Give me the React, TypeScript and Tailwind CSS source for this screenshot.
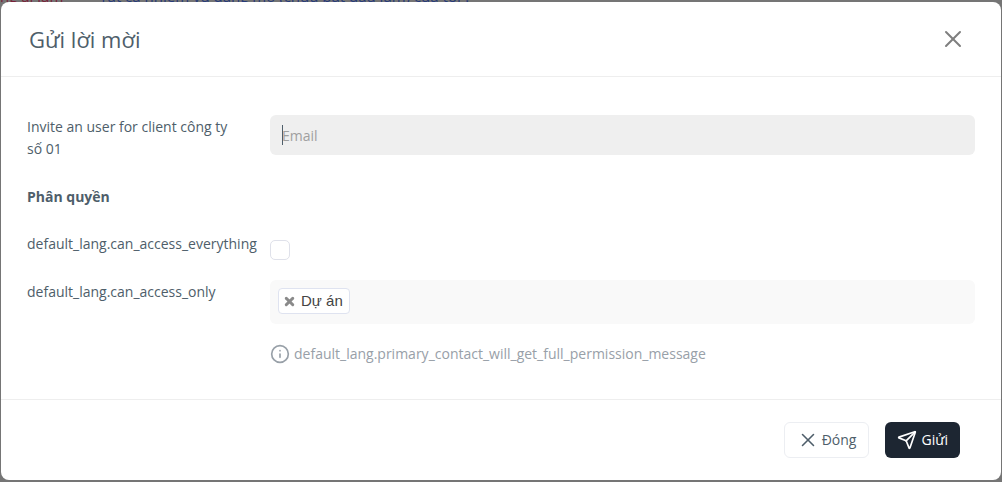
import { Info, Send, X } from "lucide-react";

const ACCESS_ITEMS = ["Dự án"];

export default function App() {
  return (
    <div className="relative min-h-screen overflow-hidden bg-[#757575] px-px py-[2px] font-['Open_Sans','Noto_Sans',sans-serif] text-sm text-[#4e5e6a]">
      <div className="absolute -top-3 left-0 flex gap-9 text-[15px] leading-4 whitespace-nowrap">
        <span className="text-[#7a2238]">ng ai làm</span>
        <span className="text-[#263a7a]">Tất cả nhiệm vụ đang mở (chưa bắt đầu làm) của tôi ?</span>
      </div>

      <form
        role="dialog"
        aria-labelledby="dialog-title"
        onSubmit={(e) => e.preventDefault()}
        className="relative rounded-lg bg-white"
      >
        <header className="flex h-[75px] items-center justify-between border-b border-[#eeeeee] pr-[34px] pl-7">
          <h1 id="dialog-title" className="text-[22px] leading-8">Gửi lời mời</h1>
          <button type="button" aria-label="Close" className="text-[#7f7f7f]">
            <X size={28} strokeWidth={1.7} />
          </button>
        </header>

        <div className="grid grid-cols-[243px_1fr] px-[26px] pt-[38px] pb-[35px]">
          <label htmlFor="email" className="pt-px pr-8 leading-[22px]">
            Invite an user for client công ty số 01
          </label>
          <div className="relative h-10">
            <input
              id="email"
              type="email"
              placeholder="Email"
              className="h-10 w-full rounded-md bg-[#efefef] px-3 caret-transparent outline-none placeholder:text-[#a0a0a0]"
            />
            <span aria-hidden="true" className="absolute top-[10px] left-3 h-5 w-px bg-[#4e5e6a]" />
          </div>

          <h2 className="col-span-2 mt-[26px] mb-[25px] leading-[22px] font-bold">Phân quyền</h2>

          <label htmlFor="access-all" className="leading-[22px]">default_lang.can_access_everything</label>
          <input
            id="access-all"
            type="checkbox"
            className="mt-[7px] size-5 appearance-none rounded-[5px] border border-[#dfe1ea] bg-white checked:bg-[#1d2632]"
          />

          <span className="mt-5 pt-px leading-[22px]">default_lang.can_access_only</span>
          <div className="mt-5 flex h-11 items-start rounded-md bg-[#f9f9f9] p-2">
            {ACCESS_ITEMS.map((item) => (
              <span
                key={item}
                className="flex h-[26px] items-center gap-[5px] rounded-sm border border-[#dfe3f0] bg-white px-1 pr-[6px] font-['Liberation_Sans',sans-serif] text-[15px] text-[#444444]"
              >
                <button type="button" aria-label={`Remove ${item}`} className="text-[#8a8a8a]">
                  <X size={13} strokeWidth={5.5} />
                </button>
                {item}
              </span>
            ))}
          </div>

          <p className="col-start-2 mt-5 flex items-center gap-1 leading-5 text-[#98a0a8]">
            <Info size={20} strokeWidth={2} />
            default_lang.primary_contact_will_get_full_permission_message
          </p>
        </div>

        <footer className="flex h-[81px] items-center justify-end gap-4 border-t border-[#eeeeee] pr-[41px]">
          <button type="button" className="flex h-9 items-center gap-[3px] rounded-md border border-[#eceef2] px-3">
            <X size={22} strokeWidth={1.7} />
            Đóng
          </button>
          <button type="submit" className="flex h-9 items-center gap-1 rounded-md bg-[#1d2632] px-3 text-white">
            <Send size={20} strokeWidth={2} />
            Giửi
          </button>
        </footer>
      </form>
    </div>
  );
}
